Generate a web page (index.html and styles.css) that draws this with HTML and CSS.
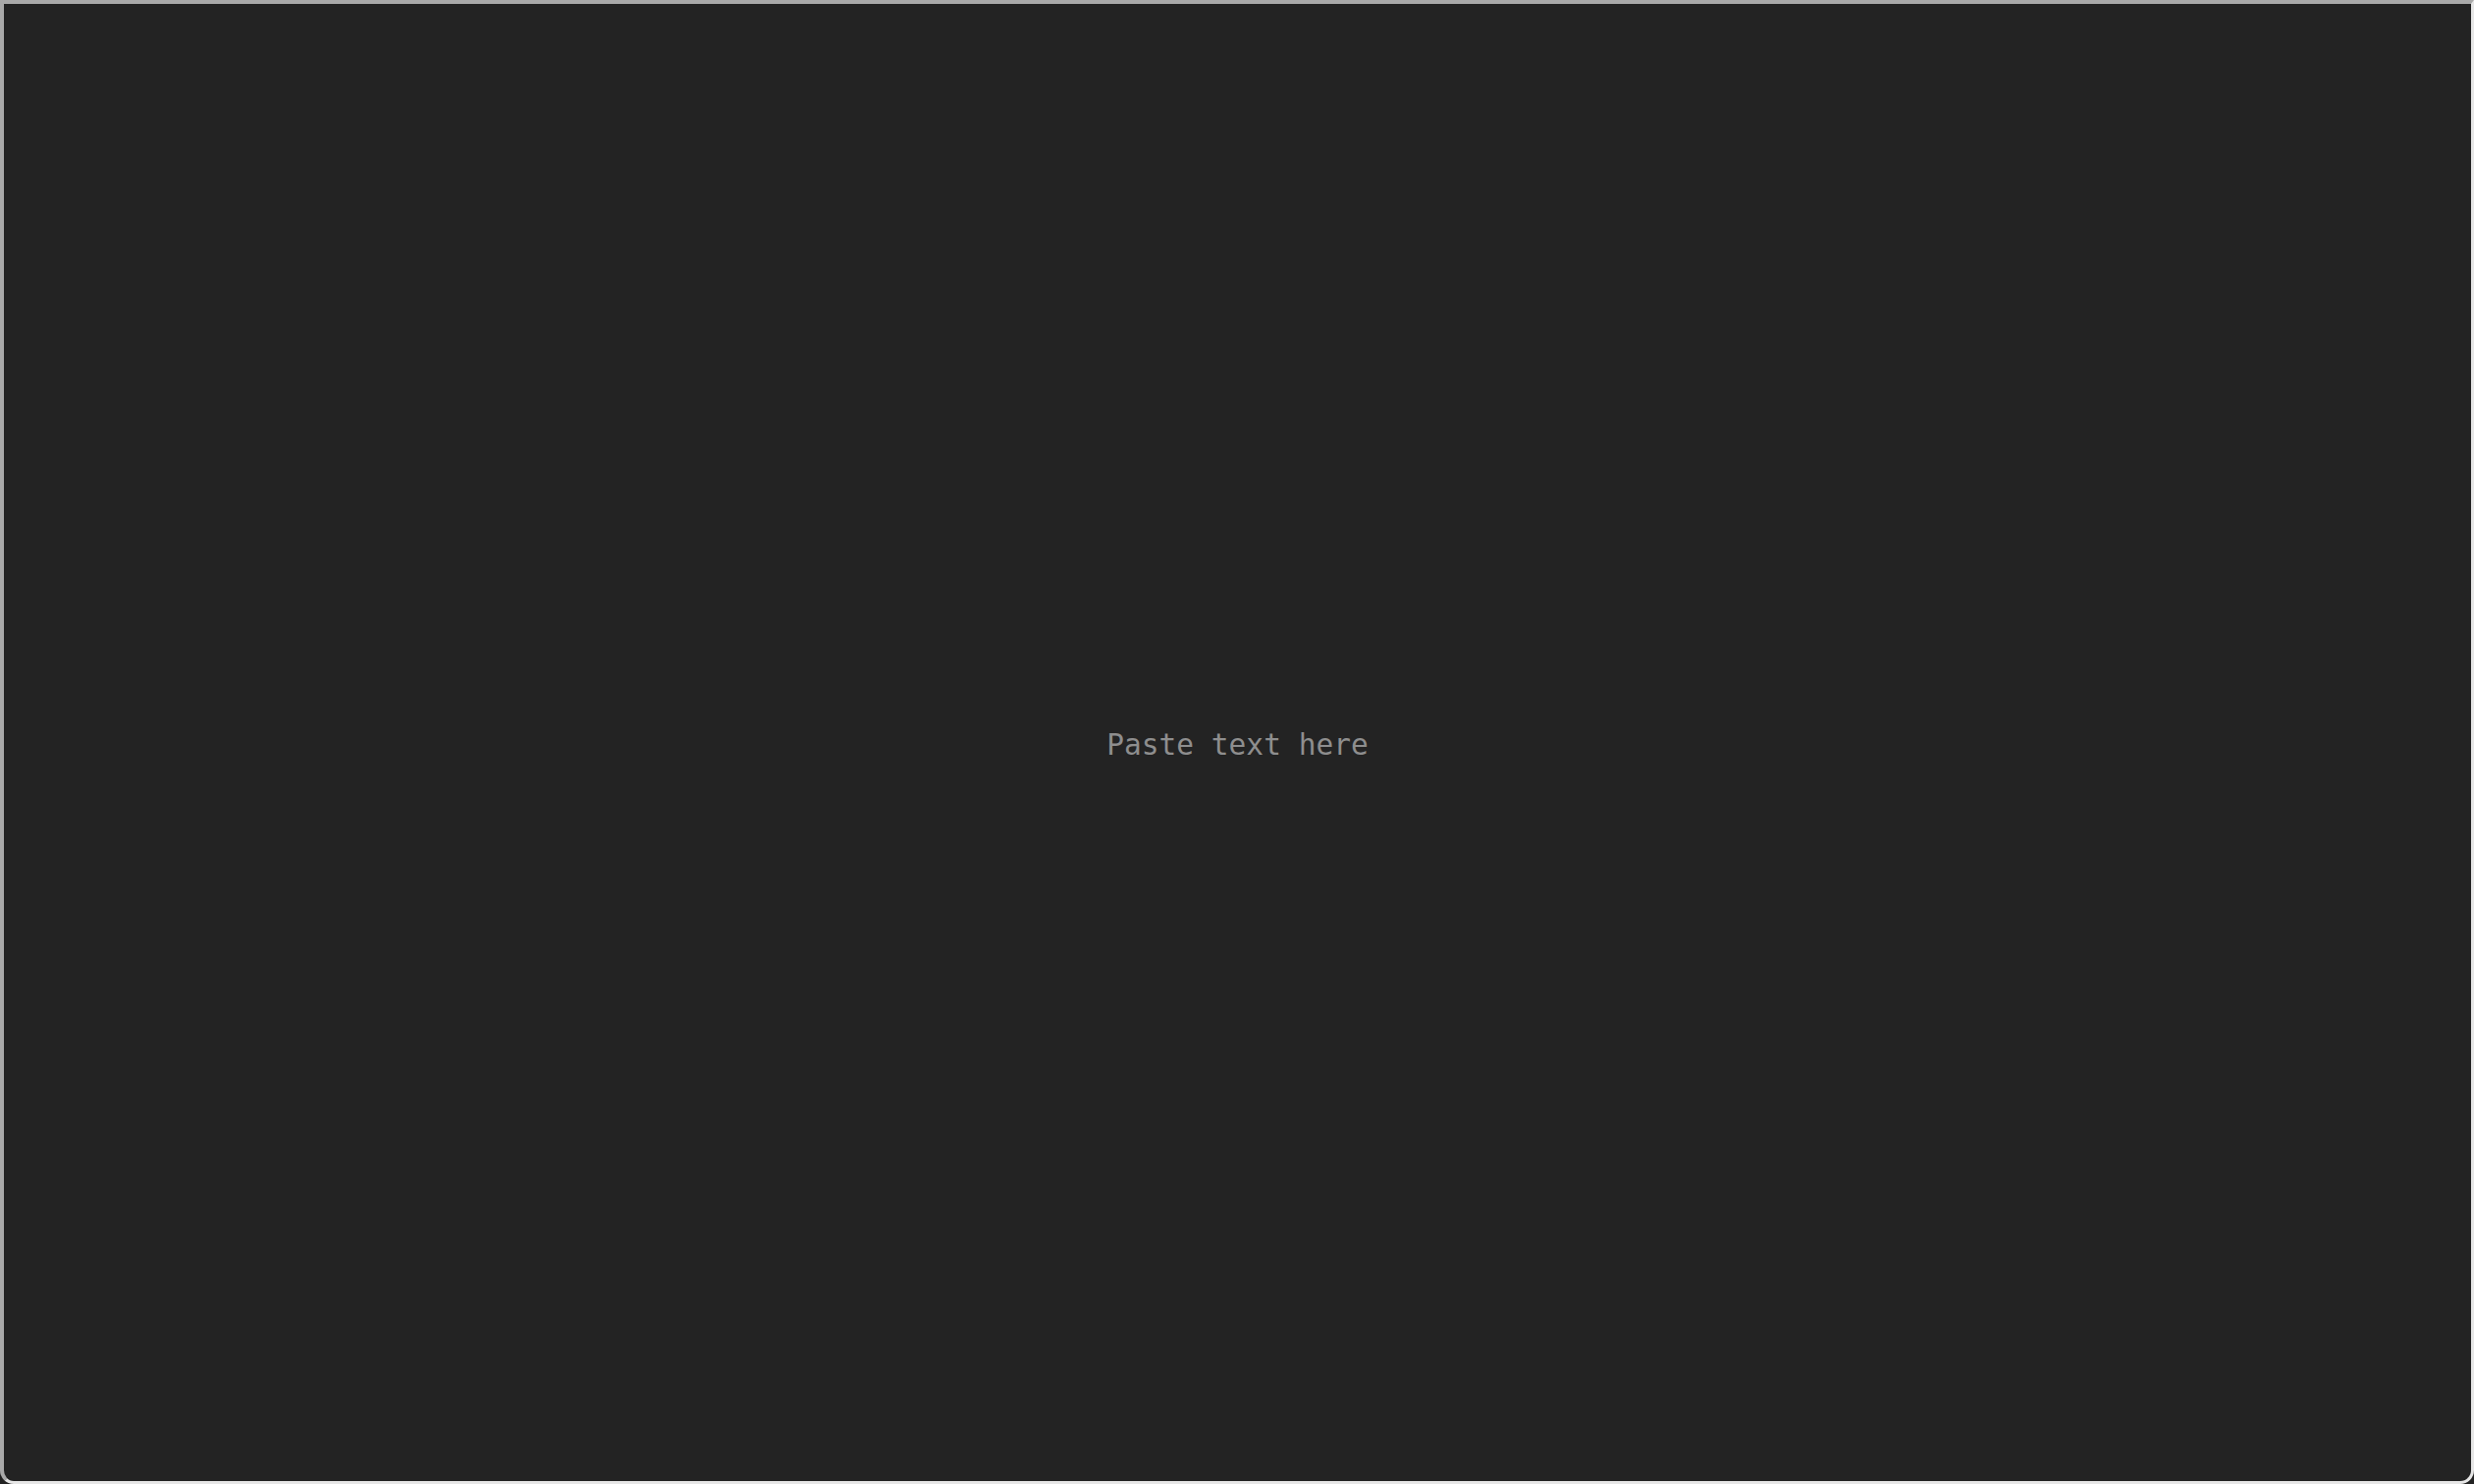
FILE: index.html
```html
<!DOCTYPE html>
<html lang="en">
<head>
<meta charset="utf-8">
<title>Paste</title>
<link rel="stylesheet" href="styles.css">
</head>
<body>
<div class="pad">
  <div class="placeholder">Paste text here</div>
</div>
</body>
</html>
```

FILE: styles.css
```css
html, body {
  margin: 0;
  padding: 0;
  height: 100%;
  background: #232323;
}
.pad {
  box-sizing: border-box;
  height: 100vh;
  width: 100vw;
  border-style: solid;
  border-width: 4px 3px 3px 4px;
  border-color: #a9a9a9 #e6e6e6 #e6e6e6 #a9a9a9;
  border-radius: 0 0 14px 14px;
  background: #232323;
  display: flex;
  align-items: center;
  justify-content: center;
  padding-top: 4px;
}
.placeholder {
  font-family: "DejaVu Sans Mono", monospace;
  font-size: 29.5px;
  color: #8e8e8e;
}
```
